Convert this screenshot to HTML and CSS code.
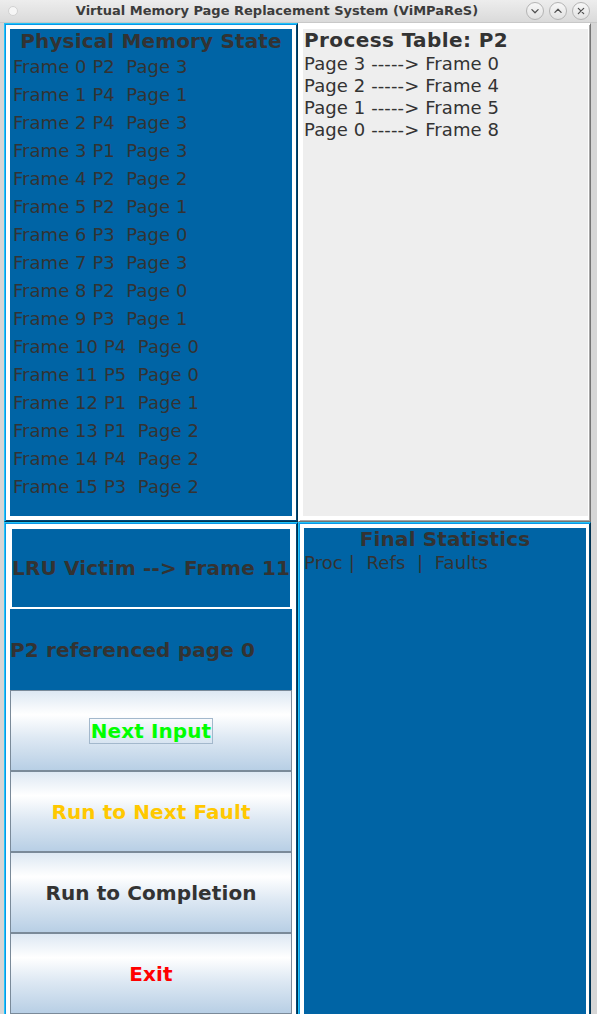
FILE: index.html
```html
<!DOCTYPE html>
<html>
<head>
<meta charset="utf-8">
<title>ViMPaReS</title>
<link rel="stylesheet" href="styles.css">
</head>
<body>
<div class="window">
  <div class="titlebar">
    <div class="tb-left"><span class="dot"></span></div>
    <div class="tb-title">Virtual Memory Page Replacement System (ViMPaReS)</div>
    <div class="tb-buttons">
      <span class="tb-btn"><svg viewBox="0 0 18 18" width="18" height="18"><path d="M5.5 7.5 L9 11 L12.5 7.5" /></svg></span>
      <span class="tb-btn"><svg viewBox="0 0 18 18" width="18" height="18"><path d="M5.5 10.5 L9 7 L12.5 10.5" /></svg></span>
      <span class="tb-btn"><svg viewBox="0 0 18 18" width="18" height="18"><path d="M6 6 L12 12 M12 6 L6 12" /></svg></span>
    </div>
  </div>
  <div class="grid">
    <section class="quad blue-q left-q">
      <div class="content mem">
        <div class="heading center">Physical Memory State</div>
        <div class="frame">Frame 0 P2  Page 3</div>
        <div class="frame">Frame 1 P4  Page 1</div>
        <div class="frame">Frame 2 P4  Page 3</div>
        <div class="frame">Frame 3 P1  Page 3</div>
        <div class="frame">Frame 4 P2  Page 2</div>
        <div class="frame">Frame 5 P2  Page 1</div>
        <div class="frame">Frame 6 P3  Page 0</div>
        <div class="frame">Frame 7 P3  Page 3</div>
        <div class="frame">Frame 8 P2  Page 0</div>
        <div class="frame">Frame 9 P3  Page 1</div>
        <div class="frame">Frame 10 P4  Page 0</div>
        <div class="frame">Frame 11 P5  Page 0</div>
        <div class="frame">Frame 12 P1  Page 1</div>
        <div class="frame">Frame 13 P1  Page 2</div>
        <div class="frame">Frame 14 P4  Page 2</div>
        <div class="frame">Frame 15 P3  Page 2</div>
      </div>
    </section>
    <section class="quad gray-q">
      <div class="content proc">
        <div class="heading">Process Table: P2</div>
        <div class="line">Page 3 -----&gt; Frame 0</div>
        <div class="line">Page 2 -----&gt; Frame 4</div>
        <div class="line">Page 1 -----&gt; Frame 5</div>
        <div class="line">Page 0 -----&gt; Frame 8</div>
      </div>
    </section>
    <section class="quad blue-q left-q bottom-left">
      <div class="content controls">
        <div class="victim"><div class="victim-inner">LRU Victim --&gt; Frame 11</div></div>
        <div class="ref">P2 referenced page 0</div>
        <button class="btn btn-next"><span class="focus">Next Input</span></button>
        <button class="btn btn-fault">Run to Next Fault</button>
        <button class="btn btn-complete">Run to Completion</button>
        <button class="btn btn-exit">Exit</button>
      </div>
    </section>
    <section class="quad blue-q right-q">
      <div class="content stats">
        <div class="heading center">Final Statistics</div>
        <div class="line">Proc |  Refs  |  Faults</div>
      </div>
    </section>
  </div>
</div>
</body>
</html>
```

FILE: styles.css
```css
html, body {
  margin: 0;
  padding: 0;
}
body {
  background: #d6d6d6;
  font-family: "DejaVu Sans", "Liberation Sans", sans-serif;
  color: #333333;
}
.window {
  width: 597px;
  height: 1014px;
  overflow: hidden;
  background: #d6d6d6;
}
.titlebar {
  height: 22px;
  border-bottom: 1px solid #c8c8c8;
  background: linear-gradient(#ededed, #dadada);
  display: flex;
  align-items: center;
}
.tb-left {
  width: 28px;
  display: flex;
  align-items: center;
  padding-left: 8px;
  box-sizing: border-box;
}
.dot {
  width: 8px;
  height: 8px;
  border-radius: 50%;
  background: #f6f6f6;
  border: 1px solid #d2d2d2;
}
.tb-title {
  flex: 1;
  text-align: center;
  font-weight: bold;
  font-size: 13px;
  color: #3c3c3c;
  white-space: nowrap;
  line-height: 22px;
}
.tb-buttons {
  width: 71px;
  padding-right: 7px;
  box-sizing: border-box;
  display: flex;
  gap: 5px;
  align-items: center;
}
.tb-btn {
  width: 16px;
  height: 16px;
  border-radius: 50%;
  border: 1px solid #b4b4b4;
  background: linear-gradient(#f7f7f7, #e2e2e2);
  display: flex;
  align-items: center;
  justify-content: center;
}
.tb-btn svg {
  width: 16px;
  height: 16px;
  fill: none;
  stroke: #505050;
  stroke-width: 1.4;
  stroke-linecap: round;
  stroke-linejoin: round;
}
.grid {
  display: grid;
  grid-template-columns: 294px 293px;
  grid-template-rows: 499px 500px;
  padding-left: 4px;
}
.quad {
  box-sizing: border-box;
  background: #ffffff;
  border: 1px solid;
  display: flex;
}
.blue-q {
  border-color: #22c4f8 #003150 #003150 #22c4f8;
  box-shadow: inset 1px 1px 0 #0a96e6, inset -1px -1px 0 #004673;
}
.gray-q {
  border-color: #ffffff #747474 #747474 #ffffff;
  box-shadow: inset 1px 1px 0 #ffffff, inset -1px -1px 0 #a6a6a6;
  padding: 5px 2px 5px 4px;
}
.left-q {
  padding: 5px;
}
.bottom-left {
  padding-top: 4px;
}
.right-q {
  padding: 5px 4px 5px 5px;
}
.content {
  flex: 1;
  min-width: 0;
  overflow: hidden;
}
.mem, .stats, .ref, .victim-inner {
  background: #0064a5;
}
.proc {
  background: #eeeeee;
}
.heading {
  font-weight: bold;
  font-size: 20px;
  line-height: 23px;
  white-space: nowrap;
  letter-spacing: 0.15px;
}
.mem .heading {
  line-height: 24px;
}
.center {
  text-align: center;
}
.frame {
  font-size: 18px;
  line-height: 28px;
  white-space: pre;
  padding-left: 3px;
  letter-spacing: 0.05px;
}
.line {
  font-size: 18px;
  line-height: 22px;
  white-space: pre;
  letter-spacing: 0.1px;
}
.proc .heading {
  letter-spacing: 0.4px;
  margin-bottom: 1px;
}
.proc .heading, .proc .line {
  padding-left: 1px;
}
.stats .heading {
  margin-bottom: 1px;
}
.controls {
  display: flex;
  flex-direction: column;
  background: #ffffff;
}
.victim {
  height: 82px;
  box-sizing: border-box;
  padding: 2px;
  background: #ffffff;
  display: flex;
  flex: none;
}
.victim-inner {
  flex: 1;
  display: flex;
  align-items: center;
  font-weight: bold;
  font-size: 20px;
  white-space: nowrap;
  overflow: hidden;
  letter-spacing: 0.15px;
}
.ref {
  height: 81px;
  flex: none;
  display: flex;
  align-items: center;
  font-weight: bold;
  font-size: 20px;
  white-space: nowrap;
  letter-spacing: 0.15px;
}
.btn {
  height: 81px;
  flex: none;
  margin: 0;
  box-sizing: border-box;
  border: 1px solid #7a8a99;
  background: linear-gradient(#dde8f3 0%, #ffffff 30%, #dde8f3 60%, #b8cfe5 100%);
  font-family: "DejaVu Sans", "Liberation Sans", sans-serif;
  font-weight: bold;
  font-size: 20px;
  letter-spacing: 0.1px;
  color: #333333;
  display: flex;
  align-items: center;
  justify-content: center;
  padding: 0;
}
.btn-next {
  color: #00ff00;
}
.focus {
  border: 1px solid #a3b8cc;
  line-height: 24px;
  padding: 0 1px;
}
.btn-fault {
  color: #ffc800;
}
.btn-exit {
  color: #ff0000;
}
```
